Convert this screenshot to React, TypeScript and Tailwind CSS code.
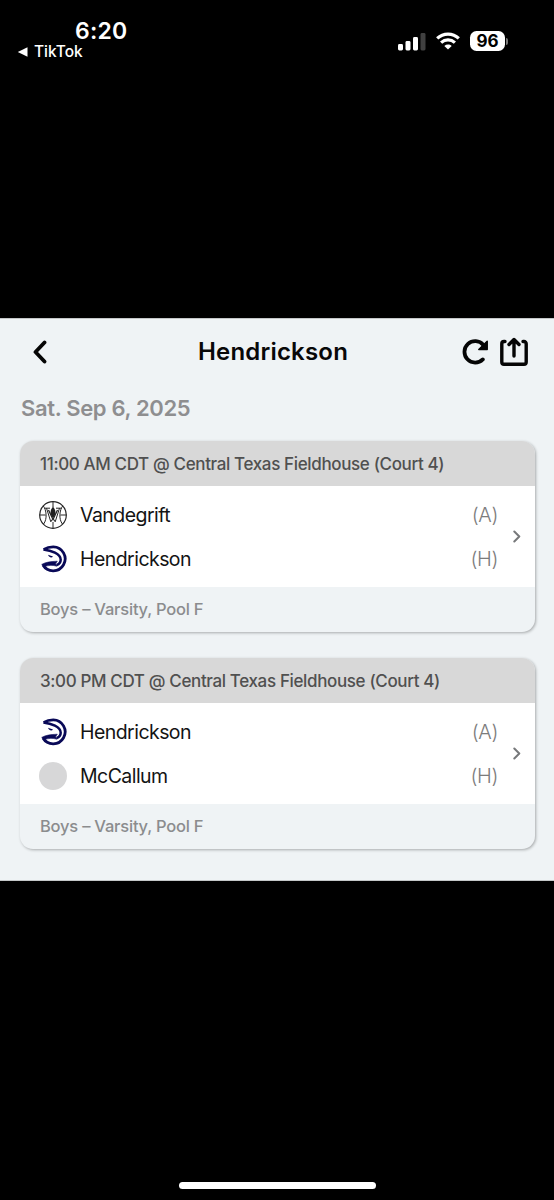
import React from 'react';

type Team = { name: string; side: string; logo: 'net' | 'hawk' | 'none' };

interface Game {
  time: string;
  division: string;
  teams: Team[];
}

const games: Game[] = [
  {
    time: '11:00 AM CDT @ Central Texas Fieldhouse (Court 4)',
    division: 'Boys – Varsity, Pool F',
    teams: [
      { name: 'Vandegrift', side: '(A)', logo: 'net' },
      { name: 'Hendrickson', side: '(H)', logo: 'hawk' },
    ],
  },
  {
    time: '3:00 PM CDT @ Central Texas Fieldhouse (Court 4)',
    division: 'Boys – Varsity, Pool F',
    teams: [
      { name: 'Hendrickson', side: '(A)', logo: 'hawk' },
      { name: 'McCallum', side: '(H)', logo: 'none' },
    ],
  },
];

const StatusBar: React.FC = () => (
  <div className="flex h-[318px] items-start justify-between text-white">
    <div className="pl-[17px] pt-[17px]">
      <div className="pl-[58px] text-[23px] font-semibold leading-[28px] tracking-[0.2px]">6:20</div>
      <div className="flex items-center gap-[6px] text-[15.5px] font-medium leading-[14px]">
        <svg width="11" height="10" viewBox="0 0 11 10" fill="currentColor">
          <path d="M10.500.3v9.4L.8 5z" />
        </svg>
        TikTok
      </div>
    </div>
    <div className="flex items-center gap-[10px] pr-[46px] pt-[31px]">
      <svg width="28" height="19" viewBox="0 0 28 19" fill="currentColor">
        <rect x="0" y="12" width="5" height="6.500" rx="1.4" />
        <rect x="7.5" y="9" width="5" height="9.5" rx="1.4" />
        <rect x="15" y="5" width="5" height="13.5" rx="1.4" />
        <rect x="22.5" y="1" width="5" height="17.5" rx="1.4" opacity=".25" />
      </svg>
      <svg width="24" height="18" viewBox="0 0 24 18" fill="none" stroke="currentColor" strokeWidth="3.2">
        <path d="M1.2 6.4C7.3.6 16.7.6 22.8 6.4" />
        <path d="M5.1 10.7c4-3.7 9.8-3.7 13.8 0" />
        <path d="M12 17.600 8.300 13.900c2.200-1.900 5.200-1.900 7.400 0z" fill="currentColor" stroke="none" />
      </svg>
      <div className="flex items-center gap-[1px]">
        <div className="flex h-5 w-[35px] items-center justify-center rounded-[6.5px] bg-white text-[17px] font-bold leading-none text-black">
          96
        </div>
        <div className="h-[7px] w-[2px] rounded-r-full bg-[#777777]" />
      </div>
    </div>
  </div>
);

const NetLogo: React.FC = () => (
  <svg className="size-7" viewBox="0 0 28 28" fill="none" stroke="#262626" strokeWidth="1">
    <circle cx="14" cy="14" r="13.3" strokeWidth="1.2" />
    <path d="M14 .7v5.300M14 21v6.300M.7 14h6M21.300 14h6.200" />
    <path d="M4.200 4.800C7.500 9 8.500 18 4.600 23M23.800 4.800C20.500 9 19.500 18 23.400 23" />
    <path d="M5.500 7.200h5.500M17 7.200h5.500M7.500 7.200l4.300 13.600 2.200-3.500 2.200 3.500 4.300-13.600" />
    <path d="M9.500 9l4.500 9.500L18.500 9" strokeWidth="1.300" />
    <path d="M14 5.500c-2.300 3-4 6.500 0 11.500 4-5 2.300-8.500 0-11.500z" fill="#202020" stroke="none" />
  </svg>
);

const HawkLogo: React.FC = () => (
  <svg className="size-7" viewBox="0 0 28 28" fill="none" stroke="#090957" strokeLinejoin="round">
    <path d="M4.800 4.400C8.200 2.200 11.200 1.800 14.300 1.800a12 12 0 1 1-10.400 18.300" strokeWidth="2.800" />
    {/* brow and back of the head */}
    <path d="M4.400 4.500C12 5.400 21.700 8.600 21.700 14.700c0 2.700-1.700 4.400-4.200 5.300" strokeWidth="2.500" />
    {/* lower beak */}
    <path d="M2.700 19.400c4.200-2.300 8.600-2.900 15.600-3.200l-1.800 2.500 1.400 2.500c-4.200-1.300-8-1-12.600.4z" fill="#090957" strokeWidth=".6" />
    <path d="m9 9.800 5 1.700c-1 1.500-3.800 1.500-5-1.700z" fill="#090957" stroke="none" />
  </svg>
);

const TeamLogo: React.FC<{ logo: Team['logo'] }> = ({ logo }) => {
  if (logo === 'net') return <NetLogo />;
  if (logo === 'hawk') return <HawkLogo />;
  return <div className="size-7 rounded-full bg-[#d7d7d8]" />;
};

const GameCard: React.FC<{ game: Game }> = ({ game }) => (
  <div className="h-[191px] overflow-hidden rounded-[13px] bg-[#eff3f5] shadow-[1px_1px_3px_rgba(0,0,0,0.3)]">
    <div className="flex h-[45px] items-center whitespace-nowrap bg-[#d8d8d8] pl-5 pt-[2px] text-[17px] font-medium tracking-[-0.36px] text-[#505050]">
      {game.time}
    </div>

    {/* Teams */}
    <div className="flex h-[101px] items-center bg-white pl-[19px] pr-[14px]">
      <div className="flex flex-1 flex-col gap-[16px]">
        {game.teams.map((team) => (
          <div key={team.name} className="flex h-7 items-center">
            <TeamLogo logo={team.logo} />
            <span className="ml-[13px] flex-1 pt-[3px] text-[19.5px] tracking-[-0.55px] text-[#141414]">{team.name}</span>
            <span className="pt-[1px] text-[20px] font-light tracking-[-0.4px] text-[#7c7c7c]">{team.side}</span>
          </div>
        ))}
      </div>
      <svg className="ml-[15px]" width="8" height="13" viewBox="0 0 8 13" fill="none" stroke="#77797b" strokeWidth="2" strokeLinecap="round" strokeLinejoin="round">
        <path d="m1.300 1.500 5 5-5 5" />
      </svg>
    </div>

    <div className="flex h-[45px] items-center pl-5 text-[16.5px] font-medium tracking-[-0.22px] text-[#8b8c8e]">
      {game.division}
    </div>
  </div>
);

export default function App() {
  return (
    <div className="flex h-[1200px] w-[554px] flex-col overflow-hidden bg-black font-['Inter','Liberation_Sans',sans-serif]">
      <StatusBar />

      <main className="h-[563px] border-y border-[#c4c7c8] bg-[#eff3f5] px-5">
        <header className="flex h-[66px] items-center">
          <div className="flex w-[82px] pl-[12px]">
            <svg width="16" height="24" viewBox="0 0 16 24" fill="none" stroke="#050505" strokeWidth="3.8" strokeLinecap="round" strokeLinejoin="round">
              <path d="M12.500 2.500 3.500 12l9 9.500" />
            </svg>
          </div>
          <h1 className="flex-1 text-center text-[24px] font-semibold tracking-[0.2px] text-[#080808]">Hendrickson</h1>
          <div className="flex w-[90px] items-center justify-end gap-[10px] pr-[5px]">
            <svg width="28" height="26" viewBox="0 0 28 26" fill="none" stroke="#050505" strokeWidth="3.8" strokeLinecap="round">
              <path d="M21.800 20.400A10.700 10.700 0 1 1 22.300 5.900" />
              <path d="M26.200 2.300v8.200h-8.400z" fill="#050505" strokeWidth="1.5" strokeLinejoin="round" />
            </svg>
            <svg width="30" height="30" viewBox="0 0 30 30" fill="none" stroke="#050505" strokeWidth="3.4" strokeLinecap="round" strokeLinejoin="round">
              <path d="M6 4.500H5A2.200 2.200 0 0 0 2.800 6.700V25A2.200 2.200 0 0 0 5 27.200h20a2.200 2.200 0 0 0 2.200-2.200V6.700A2.200 2.200 0 0 0 25 4.500h-1" />
              <path d="M15 19V3M10 7.500 15 2.500l5 5" />
            </svg>
          </div>
        </header>

        <h2 className="flex h-[56px] items-start pl-[1px] pt-[7px] text-[22px] font-semibold leading-[33px] tracking-[-0.33px] text-[#8e8e90]">
          Sat. Sep 6, 2025
        </h2>

        <div className="mr-[-1px] flex flex-col gap-[26px]">
          {games.map((game) => (
            <GameCard key={game.time} game={game} />
          ))}
        </div>
      </main>

      {/* Home indicator */}
      <div className="mx-auto mb-[11px] mt-auto h-[7px] w-[197px] rounded-full bg-white" />
    </div>
  );
}
